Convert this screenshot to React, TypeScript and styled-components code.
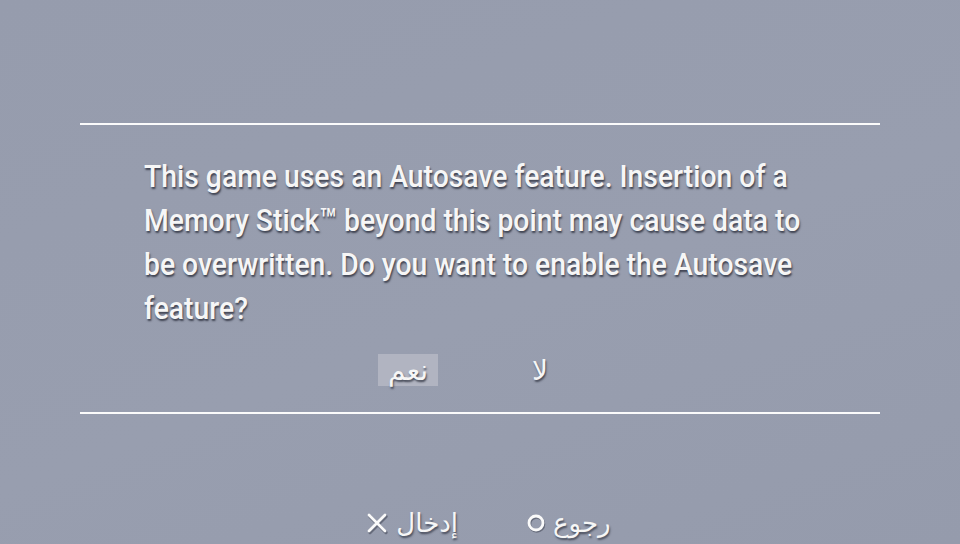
import React from 'react';
import styled, { createGlobalStyle } from 'styled-components';

const GlobalStyle = createGlobalStyle`
  html, body {
    margin: 0;
    padding: 0;
    width: 960px;
    height: 544px;
    overflow: hidden;
    background: #979dae;
  }
`;

const message = [
  'This game uses an Autosave feature. Insertion of a',
  'Memory Stick\u2122 beyond this point may cause data to',
  'be overwritten. Do you want to enable the Autosave',
  'feature?',
];

export default function App() {
  return (
    <>
      <GlobalStyle />
      <StyledScreen>
        <StyledDialog>
          <StyledMessage>
            {message.map((line) => (
              <StyledLine key={line}>{line}</StyledLine>
            ))}
          </StyledMessage>
          <StyledChoices>
            <StyledChoice selected>نعم</StyledChoice>
            <StyledChoice>لا</StyledChoice>
          </StyledChoices>
        </StyledDialog>
        <StyledHints>
          <StyledHint>
            <svg width="24" height="24" viewBox="0 0 24 24">
              <path d="M4 4 L20 20 M20 4 L4 20" stroke="#2e3240" strokeWidth="3.4" strokeLinecap="round" transform="translate(1 1.5)" opacity="0.45" />
              <path d="M4 4 L20 20 M20 4 L4 20" stroke="#fafafa" strokeWidth="2.8" strokeLinecap="round" />
            </svg>
            <span>إدخال</span>
          </StyledHint>
          <StyledHint>
            <svg width="20" height="20" viewBox="0 0 20 20">
              <circle cx="10.8" cy="11.2" r="7" fill="none" stroke="#2e3240" strokeWidth="3" opacity="0.45" />
              <circle cx="10" cy="10" r="7" fill="none" stroke="#fafafa" strokeWidth="2.8" />
            </svg>
            <span>رجوع</span>
          </StyledHint>
        </StyledHints>
      </StyledScreen>
    </>
  );
}

const StyledScreen = styled.div`
  width: 960px;
  height: 544px;
  padding-top: 123px;
  box-sizing: border-box;
  display: flex;
  flex-direction: column;
  background: linear-gradient(160deg, #969cad 0%, #989eaf 55%, #959bac 100%);
`;

const StyledDialog = styled.div`
  margin: 0 80px;
  border-top: 2px solid #fbfbfb;
  border-bottom: 2px solid #fbfbfb;
  height: 291px;
  box-sizing: border-box;
  padding: 29px 0 0 64px;
  display: flex;
  flex-direction: column;
`;

const StyledMessage = styled.div`
  font-family: Roboto, "Liberation Sans", sans-serif;
  font-size: 32px;
  font-weight: 500;
  line-height: 44px;
  color: #f6f6f6;
  text-shadow: 1px 2px 2px rgba(40, 44, 58, 0.8);
`;

const StyledLine = styled.div`
  white-space: nowrap;
  transform: scaleX(0.885);
  transform-origin: left center;
`;

const StyledChoices = styled.div`
  display: flex;
  justify-content: center;
  gap: 72px;
  margin: 24px 76px 0 0;
`;

const StyledChoice = styled.div<{ selected?: boolean }>`
  width: 60px;
  height: 32px;
  display: flex;
  align-items: center;
  justify-content: center;
  font-family: "DejaVu Sans", "Noto Sans", sans-serif;
  font-size: 28px;
  font-weight: 500;
  color: #f6f6f6;
  text-shadow: 1px 2px 2px rgba(40, 44, 58, 0.75);
  background: ${({ selected }) => (selected ? '#b1b4c1' : 'transparent')};
`;

const StyledHints = styled.div`
  margin-top: 94px;
  display: flex;
  justify-content: center;
  gap: 68px;
  padding-left: 16px;
`;

const StyledHint = styled.div`
  display: flex;
  align-items: center;
  gap: 7px;
  font-family: "DejaVu Sans", "Noto Sans", sans-serif;
  font-size: 26px;
  color: #f6f6f6;
  text-shadow: 1px 2px 2px rgba(40, 44, 58, 0.7);
`;
